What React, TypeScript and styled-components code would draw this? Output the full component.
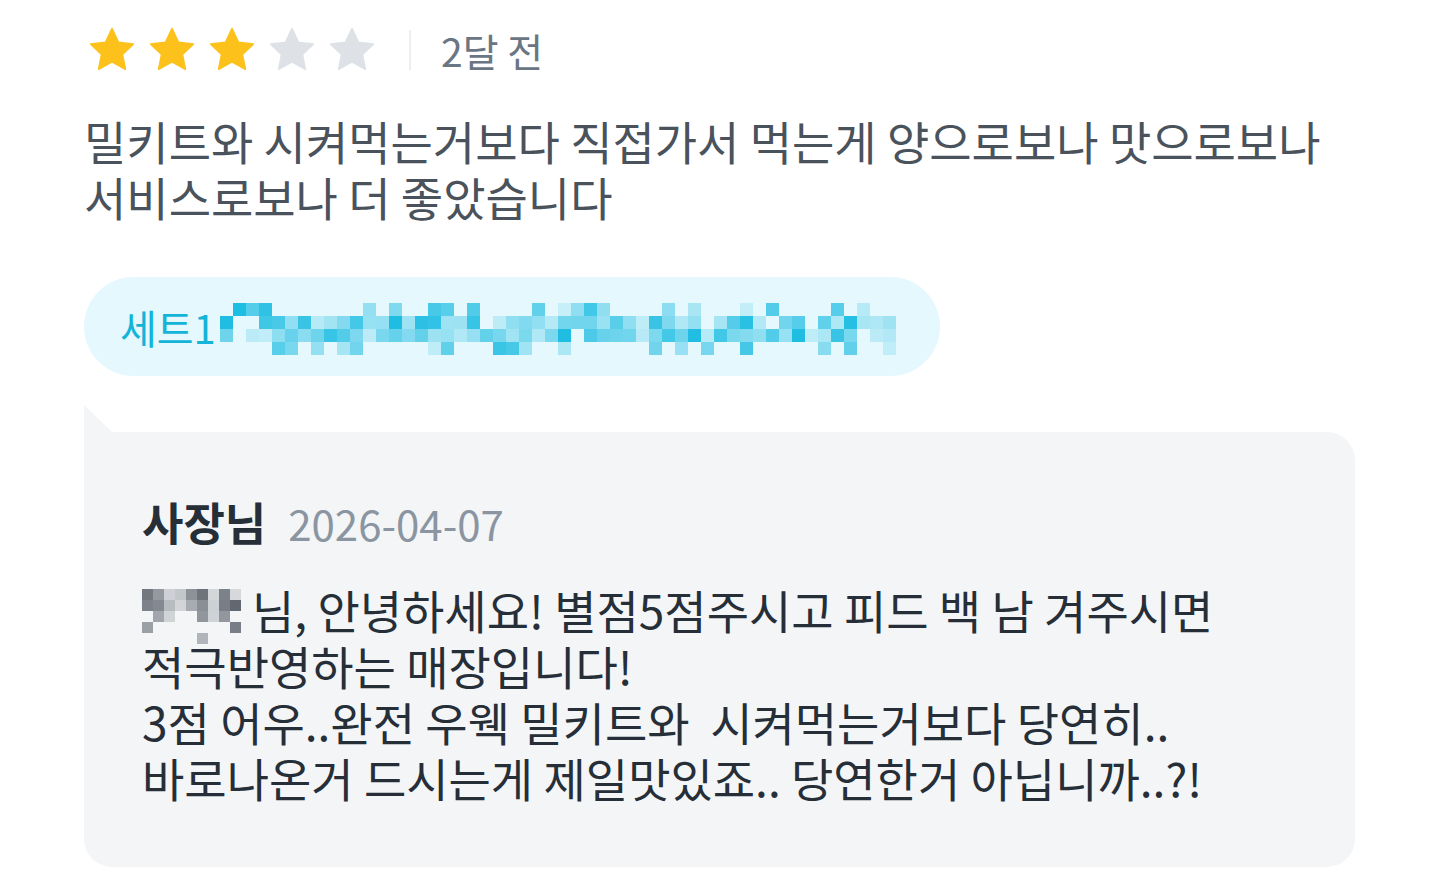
import React from 'react';
import styled, { createGlobalStyle } from 'styled-components';

const COLORS = {
  star: '#fcc21b',
  starOff: '#dee2e7',
  meta: '#6b7684',
  body: '#4a525c',
  dark: '#262e38',
  date: '#8b95a1',
  chipBg: '#e5f8fd',
  chipText: '#14b4d8',
  replyBg: '#f3f5f7',
  divider: '#eceef1',
};

const FONT = `'Noto Sans CJK KR', 'Noto Sans', sans-serif`;

const GlobalStyle = createGlobalStyle`
  html, body {
    margin: 0;
    padding: 0;
    background: #ffffff;
  }
  body {
    font-family: ${FONT};
    -webkit-font-smoothing: antialiased;
  }
`;

// Deterministic mosaic so the censored parts look the same every render.
const mosaic = (
  seed: number,
  cols: number,
  rows: number,
  density: (col: number, row: number) => number,
) => {
  let s = seed;
  const rand = () => {
    s = (s * 1103515245 + 12345) % 2147483648;
    return s / 2147483648;
  };
  const cells: { c: number; r: number; a: number }[] = [];
  for (let c = 0; c < cols; c++) {
    for (let r = 0; r < rows; r++) {
      const v = rand();
      const a = 0.15 + rand() * 0.8;
      if (v < density(c, r)) cells.push({ c, r, a });
    }
  }
  return cells;
};

const Mosaic = ({
  seed,
  cols,
  rows,
  cell,
  color,
  density,
}: {
  seed: number;
  cols: number;
  rows: number;
  cell: number;
  color: string;
  density: (col: number, row: number) => number;
}) => {
  const cells = React.useMemo(
    () => mosaic(seed, cols, rows, density),
    [seed, cols, rows, density],
  );
  return (
    <MosaicSvg width={cols * cell} height={rows * cell} aria-hidden>
      {cells.map(({ c, r, a }) => (
        <rect
          key={`${c}-${r}`}
          x={c * cell}
          y={r * cell}
          width={cell}
          height={cell}
          fill={color}
          fillOpacity={a}
        />
      ))}
    </MosaicSvg>
  );
};

const chipDensity = (c: number, r: number) => {
  // gaps between "words"
  if ([1, 20, 45].includes(c)) return 0.1;
  if (r === 0) return 0.35;
  if (r === 3) return 0.5;
  return 0.92;
};

const nameDensity = (c: number, r: number) => {
  if (c === 9) return r < 2 ? 0.4 : 0;
  return r === 0 ? 0.95 : r === 1 ? 0.95 : r === 2 ? 0.55 : r === 3 ? 0.2 : 0.08;
};

const Star = ({ on }: { on: boolean }) => (
  <svg width="50" height="48" viewBox="0 0 24 23">
    <path
      d="M12 1.2l3.1 6.6 7.1.9-5.2 4.9 1.4 7.1L12 17.2l-6.4 3.5 1.4-7.1L1.8 8.7l7.1-.9z"
      fill={on ? COLORS.star : COLORS.starOff}
      stroke={on ? COLORS.star : COLORS.starOff}
      strokeWidth="0.8"
      strokeLinejoin="round"
    />
  </svg>
);

const App = () => {
  const rating = 3;
  return (
    <>
      <GlobalStyle />
      <Page>
        <MetaRow>
          <Stars>
            {[1, 2, 3, 4, 5].map((n) => (
              <Star key={n} on={n <= rating} />
            ))}
          </Stars>
          <Divider />
          <Ago>2달 전</Ago>
        </MetaRow>

        <ReviewText>
          밀키트와 시켜먹는거보다 직접가서 먹는게 양으로보나 맛으로보나
          <br />
          서비스로보나 더 좋았습니다
        </ReviewText>

        <MenuChip>
          <ChipLabel>세트1</ChipLabel>
          <Mosaic
            seed={7}
            cols={52}
            rows={4}
            cell={13}
            color="#13b9e0"
            density={chipDensity}
          />
        </MenuChip>

        <Reply>
          <ReplyHeader>
            <Owner>사장님</Owner>
            <ReplyDate>2026-04-07</ReplyDate>
          </ReplyHeader>
          <ReplyBody>
            <Mosaic
              seed={58}
              cols={10}
              rows={5}
              cell={11}
              color="#2f3742"
              density={nameDensity}
            />
            님, 안녕하세요! 별점5점주시고 피드 백 남 겨주시면
            <br />
            적극반영하는 매장입니다!
            <br />
            3점 어우..완전 우웩 밀키트와&nbsp; 시켜먹는거보다 당연히..
            <br />
            바로나온거 드시는게 제일맛있죠.. 당연한거 아닙니까..?!
          </ReplyBody>
        </Reply>
      </Page>
    </>
  );
};

const Page = styled.main`
  width: 1440px;
  height: 896px;
  box-sizing: border-box;
  padding: 25px 85px 0 84px;
  display: flex;
  flex-direction: column;
  align-items: flex-start;
  overflow: hidden;
`;

const MetaRow = styled.div`
  display: flex;
  align-items: center;
  height: 50px;
`;

const Stars = styled.div`
  display: flex;
  gap: 10px;
  padding-left: 3px;
`;

const Divider = styled.span`
  width: 2px;
  height: 40px;
  margin: 0 30px 0 32px;
  background: ${COLORS.divider};
`;

const Ago = styled.span`
  font-size: 39px;
  color: ${COLORS.meta};
  line-height: 1;
`;

const ReviewText = styled.p`
  margin: 37px 0 0;
  font-size: 46px;
  line-height: 56px;
  color: ${COLORS.body};
`;

const MenuChip = styled.div`
  margin-top: 53px;
  height: 99px;
  width: 856px;
  box-sizing: border-box;
  padding: 0 36px;
  border-radius: 50px;
  background: ${COLORS.chipBg};
  display: flex;
  align-items: center;
  gap: 4px;
`;

const ChipLabel = styled.span`
  font-size: 40px;
  color: ${COLORS.chipText};
  line-height: 1;
`;

const MosaicSvg = styled.svg`
  display: inline-block;
  flex-shrink: 0;
  margin-top: 4px;
`;

const Reply = styled.section`
  position: relative;
  margin-top: 56px;
  align-self: stretch;
  box-sizing: border-box;
  padding: 62px 58px 62px;
  background: ${COLORS.replyBg};
  border-radius: 0 28px 28px 28px;

  &::before {
    content: '';
    position: absolute;
    left: 0;
    top: -27px;
    width: 28px;
    height: 27px;
    background: ${COLORS.replyBg};
    clip-path: polygon(0 0, 100% 100%, 0 100%);
  }
`;

const ReplyHeader = styled.div`
  display: flex;
  align-items: baseline;
  gap: 22px;
  line-height: 56px;
`;

const Owner = styled.span`
  font-size: 45px;
  font-weight: 700;
  color: ${COLORS.dark};
`;

const ReplyDate = styled.span`
  font-size: 42px;
  color: ${COLORS.date};
`;

const ReplyBody = styled.p`
  margin: 30px 0 0;
  font-size: 46px;
  line-height: 56px;
  color: ${COLORS.dark};

  ${MosaicSvg} {
    vertical-align: top;
    margin: 8px 0 -20px;
    opacity: 0.8;
  }
`;

export default App;
